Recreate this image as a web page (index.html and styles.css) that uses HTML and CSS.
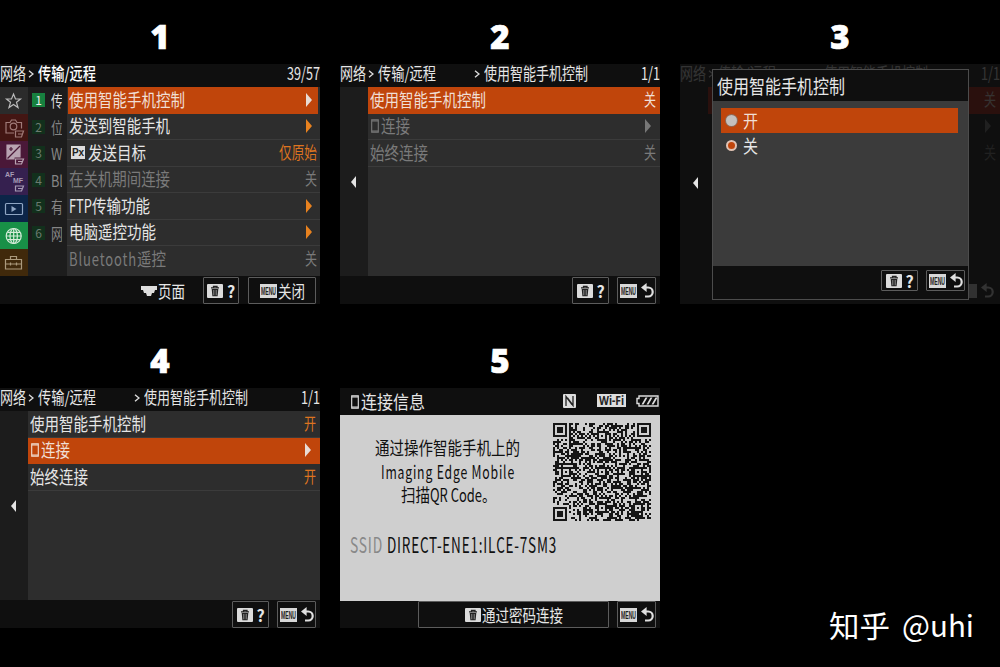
FILE: index.html
```html
<!DOCTYPE html>
<html lang="zh-CN">
<head>
    <meta charset="UTF-8">
    <meta name="viewport" content="width=device-width, initial-scale=1.0">
    <title>使用智能手机控制</title>
    <link rel="stylesheet" href="styles.css">
</head>
<body>
    <!-- shared icons -->
    <svg class="defs">
        <symbol id="trash" viewBox="0 0 16 14">
            <rect width="16" height="14" rx="1" fill="#dcdcdc"/>
            <path d="M4 3.8h8M6.5 3.5V2.3h3.5v1.2" fill="none" stroke="#222" stroke-width="1.3"/>
            <path d="M4.7 5h6.6l-.7 7.3H5.4z" fill="#222"/>
            <path d="M6.8 6v5.3M9.2 6v5.3" stroke="#bbb" stroke-width=".7"/>
        </symbol>
        <symbol id="back" viewBox="0 0 13 15">
            <path d="M3 4.5h4.2a4.5 4.5 0 0 1 0 9H4" fill="none" stroke="#e0e0e0" stroke-width="2.2"/>
            <path d="M0 4.5 5.6 0v9z" fill="#e0e0e0"/>
        </symbol>
        <symbol id="phone" viewBox="0 0 8 14">
            <path d="M.7 .7h6.6v12.6H.7zM1 2h6M1 12h6" fill="none" stroke="currentColor" stroke-width="1.1"/>
        </symbol>
    </svg>

    <div class="sheet">
        <!-- 1 -->
        <div class="step">
            <div class="num">1</div>
            <div class="screen">
                <div class="head">
                    <span class="crumb c1" data-w="26">网络</span>
                    <svg class="gt" viewBox="0 0 6 8"><path d="M1 .8 5 4 1 7.2"/></svg>
                    <span class="crumb c2 strong" data-w="58">传输/远程</span>
                    <span class="page" data-w="33">39/57</span>
                </div>
                <div class="main">
                    <div class="tabs">
                        <div class="tab star"><svg viewBox="0 0 28 27"><path d="m13.500 7 2 5h5l-4 3.300 1.500 5.200-4.500-3.100-4.500 3.100 1.500-5.200-4-3.300h5z"/></svg></div>
                        <div class="tab cam"><svg viewBox="0 0 28 27"><path d="M14 19H6V8.500h4l1.500-2.500h4L17 8.500h4.500v6"/><circle cx="13.500" cy="12.500" r="3.300"/><path d="M15.500 17h8l-2 6h-6zM18 20h4"/></svg></div>
                        <div class="tab exp"><svg viewBox="0 0 28 27"><path d="M7 4h13v12h-6v2H7z" fill="currentColor"/><path d="M7.500 17.500 20 5" stroke="#4a1838"/><path d="M9 8h4M11 6v4" stroke="#4a1838"/><path d="M15.500 18h8l-2 5h-6zM18 20.500h4"/></svg></div>
                        <div class="tab foc"><span class="af">AF</span><span class="mf">MF</span><svg viewBox="0 0 28 27"><path d="M15.500 18h8l-2 5h-6zM18 20.500h4"/></svg></div>
                        <div class="tab play"><svg viewBox="0 0 28 27"><rect x="5.500" y="8.500" width="17" height="11" rx="1"/><path d="m11.500 11 5 3-5 3z" fill="currentColor" stroke="none"/></svg></div>
                        <div class="tab net"><svg viewBox="0 0 28 27"><circle cx="13.700" cy="14" r="7.500"/><ellipse cx="13.700" cy="14" rx="3.700" ry="7.500"/><path d="M13.700 6.500v15M6.300 14h15M7.500 10.300h12.500M7.500 17.700h12.500"/></svg></div>
                        <div class="tab box"><svg viewBox="0 0 28 27"><path d="M5.500 10.500h16v9.500h-16zM10.500 10V7.500h6V10M6 15h15M10.500 13.500v3M16.500 13.500v3"/></svg></div>
                    </div>
                    <div class="groups">
                        <div class="group on"><b>1</b><span data-w="12">传</span></div>
                        <div class="group"><b>2</b><span data-w="12">位</span></div>
                        <div class="group"><b>3</b><span data-w="15">Wi</span></div>
                        <div class="group"><b>4</b><span data-w="12">Bl</span></div>
                        <div class="group"><b>5</b><span data-w="12">有</span></div>
                        <div class="group"><b>6</b><span data-w="12">网</span></div>
                    </div>
                    <div class="list narrow">
                        <div class="row sel"><span data-w="116">使用智能手机控制</span><i class="arrow"></i></div>
                        <div class="row"><span data-w="101">发送到智能手机</span><i class="arrow"></i></div>
                        <div class="row"><em class="px">Px</em><span data-w="58">发送目标</span><span class="val" data-w="38">仅原始</span></div>
                        <div class="row off"><span data-w="101">在关机期间连接</span><span class="val" data-w="12">关</span></div>
                        <div class="row"><span data-w="23">FTP</span><span data-w="58">传输功能</span><i class="arrow"></i></div>
                        <div class="row"><span data-w="87">电脑遥控功能</span><i class="arrow"></i></div>
                        <div class="row off"><span class="wide" data-w="68">Bluetooth</span><span data-w="29">遥控</span><span class="val" data-w="12">关</span></div>
                    </div>
                </div>
                <div class="foot first">
                    <svg class="wheel" viewBox="0 0 16 10"><path d="M0 0h16v4h-2l-1 3h-2l-1 3H6L5 7H3L2 4H0z" fill="#ddd"/></svg>
                    <span class="word" data-w="27">页面</span>
                    <div class="btn help"><svg class="trash"><use href="#trash"/></svg><b>?</b></div>
                    <div class="btn close"><span class="menu"><span data-w="15">MENU</span></span><span class="word" data-w="27">关闭</span></div>
                </div>
            </div>
        </div>

        <!-- 2 -->
        <div class="step">
            <div class="num">2</div>
            <div class="screen">
                <div class="head">
                    <span class="crumb c1" data-w="26">网络</span>
                    <svg class="gt" viewBox="0 0 6 8"><path d="M1 .8 5 4 1 7.2"/></svg>
                    <span class="crumb c2" data-w="58">传输/远程</span>
                    <svg class="gt far" viewBox="0 0 6 8"><path d="M1 .8 5 4 1 7.2"/></svg>
                    <span class="crumb" data-w="104">使用智能手机控制</span>
                    <span class="page" data-w="19">1/1</span>
                </div>
                <div class="main">
                    <div class="gutter"><i class="left"></i></div>
                    <div class="list">
                        <div class="row sel"><span data-w="116">使用智能手机控制</span><span class="val" data-w="12">关</span></div>
                        <div class="row off"><svg class="phone"><use href="#phone"/></svg><span data-w="29">连接</span><i class="arrow"></i></div>
                        <div class="row off"><span data-w="58">始终连接</span><span class="val" data-w="12">关</span></div>
                    </div>
                </div>
                <div class="foot">
                    <div class="btn help"><svg class="trash"><use href="#trash"/></svg><b>?</b></div>
                    <div class="btn return"><span class="menu"><span data-w="15">MENU</span></span><svg class="back"><use href="#back"/></svg></div>
                </div>
            </div>
        </div>

        <!-- 3 -->
        <div class="step">
            <div class="num">3</div>
            <div class="screen dimmed">
                <div class="under">
                    <div class="head">
                        <span class="crumb c1" data-w="26">网络</span>
                        <svg class="gt" viewBox="0 0 6 8"><path d="M1 .8 5 4 1 7.2"/></svg>
                        <span class="crumb c2" data-w="58">传输/远程</span>
                        <svg class="gt far" viewBox="0 0 6 8"><path d="M1 .8 5 4 1 7.2"/></svg>
                        <span class="crumb" data-w="104">使用智能手机控制</span>
                        <span class="page" data-w="19">1/1</span>
                    </div>
                    <div class="main">
                        <div class="gutter"></div>
                        <div class="list">
                            <div class="row sel"><span class="val" data-w="12">关</span></div>
                            <div class="row off"><i class="arrow"></i></div>
                            <div class="row off"><span class="val" data-w="12">关</span></div>
                        </div>
                    </div>
                    <div class="foot">
                        <div class="btn return"><span class="menu"></span><svg class="back"><use href="#back"/></svg></div>
                    </div>
                </div>
                <i class="left over"></i>
                <div class="dialog">
                    <div class="dialog-title"><span data-w="128">使用智能手机控制</span></div>
                    <div class="options">
                        <div class="option sel"><i class="radio"></i><span data-w="15">开</span></div>
                        <div class="option"><i class="radio checked"></i><span data-w="15">关</span></div>
                    </div>
                    <div class="dialog-foot">
                        <div class="btn help"><svg class="trash"><use href="#trash"/></svg><b>?</b></div>
                        <div class="btn return"><span class="menu"><span data-w="15">MENU</span></span><svg class="back"><use href="#back"/></svg></div>
                    </div>
                </div>
            </div>
        </div>

        <!-- 4 -->
        <div class="step">
            <div class="num">4</div>
            <div class="screen">
                <div class="head">
                    <span class="crumb c1" data-w="26">网络</span>
                    <svg class="gt" viewBox="0 0 6 8"><path d="M1 .8 5 4 1 7.2"/></svg>
                    <span class="crumb c2" data-w="58">传输/远程</span>
                    <svg class="gt far" viewBox="0 0 6 8"><path d="M1 .8 5 4 1 7.2"/></svg>
                    <span class="crumb" data-w="104">使用智能手机控制</span>
                    <span class="page" data-w="19">1/1</span>
                </div>
                <div class="main">
                    <div class="gutter"><i class="left"></i></div>
                    <div class="list">
                        <div class="row"><span data-w="116">使用智能手机控制</span><span class="val" data-w="12">开</span></div>
                        <div class="row sel"><svg class="phone"><use href="#phone"/></svg><span data-w="29">连接</span><i class="arrow"></i></div>
                        <div class="row"><span data-w="58">始终连接</span><span class="val" data-w="12">开</span></div>
                    </div>
                </div>
                <div class="foot">
                    <div class="btn help"><svg class="trash"><use href="#trash"/></svg><b>?</b></div>
                    <div class="btn return"><span class="menu"><span data-w="15">MENU</span></span><svg class="back"><use href="#back"/></svg></div>
                </div>
            </div>
        </div>

        <!-- 5 -->
        <div class="step">
            <div class="num">5</div>
            <div class="screen">
                <div class="info-head">
                    <svg class="phone"><use href="#phone"/></svg><span data-w="64">连接信息</span>
                    <svg class="nfc" viewBox="0 0 13 14"><rect width="13" height="14" rx="1" fill="#ddd"/><path d="M3 12V2.500l6 8M10 2v9.500L4.500 4" fill="none" stroke="#222" stroke-width="1.300"/></svg>
                    <span class="wifi"><span data-w="25">Wi-Fi</span></span>
                    <svg class="battery" viewBox="0 0 24 12"><path d="M4 1h19v10H4V8.500H2v-5h2z" fill="none" stroke="#ddd" stroke-width="1.400"/><path d="m6.500 9.500 4-7h2l-4 7zM11.500 9.500l4-7h2l-4 7zM16.500 9.500l4-7h1.500v1l-3.500 6z" fill="#ddd"/></svg>
                </div>
                <div class="info">
                    <div class="scan">
                        <div class="guide">
                            <span data-w="145">通过操作智能手机上的</span>
                            <span class="wide" data-w="134">Imaging Edge Mobile</span>
                            <span class="scanline"><span data-w="29">扫描</span><span data-w="52">QR Code</span><span data-w="14">。</span></span>
                        </div>
                        <svg class="qr" id="qr" viewBox="0 0 49 49"></svg>
                    </div>
                    <div class="ssid"><span class="label wide" data-w="33">SSID</span><span class="wide" data-w="170">DIRECT-ENE1:ILCE-7SM3</span></div>
                </div>
                <div class="foot">
                    <div class="btn password"><svg class="trash"><use href="#trash"/></svg><span class="word" data-w="81">通过密码连接</span></div>
                    <div class="btn return"><span class="menu"><span data-w="15">MENU</span></span><svg class="back"><use href="#back"/></svg></div>
                </div>
            </div>
        </div>

        <div class="credit"><span data-w="61">知乎</span><span data-w="72">@uhi</span></div>
    </div>

    <script src="script.js"></script>
</body>
</html>
```
FILE: styles.css
```css
* {
    box-sizing: border-box;
}

body {
    margin: 0;
    width: 1000px;
    height: 667px;
    overflow: hidden;
    background: #000;
    color: #e6e6e6;
    font-family: "Noto Sans CJK SC", "Noto Sans", sans-serif;
    font-size: 18px;
}

.defs {
    position: absolute;
    width: 0;
    height: 0;
}

svg {
    display: block;
    flex: none;
}

.sheet {
    display: grid;
    grid-template-columns: 320px 320px 320px;
    grid-template-rows: 324px 324px;
    column-gap: 20px;
}

.num {
    height: 64px;
    padding-top: 9px;
    line-height: 56px;
    font-family: "Open Sans", sans-serif;
    font-weight: 800;
    font-size: 33px;
    text-align: center;
    color: #fff;
    -webkit-text-stroke: .7px #fff;
}

.screen {
    display: flex;
    flex-direction: column;
    width: 320px;
    height: 240px;
    background: #0f0f0f;
    position: relative;
}

/* the camera font is condensed, script.js squeezes every label to data-w */
[data-w] {
    display: inline-block;
    flex: none;
    white-space: nowrap;
    transform-origin: left center;
}

.wide {
    letter-spacing: 1.2px;
}

.head {
    display: flex;
    align-items: center;
    height: 23px;
    flex: none;
    padding-bottom: 5px;
    font-size: 16.5px;
    line-height: 18px;
}

.gt {
    width: 6px;
    height: 8px;
    margin: 2px 4px 0 2px;
    fill: none;
    stroke: #ddd;
    stroke-width: 1.4;
}

.gt.far {
    margin: 2px 4px 0 38px;
}

.strong {
    font-weight: 500;
    color: #fff;
}

.page {
    margin-left: auto;
    font-size: 17.5px;
}

.main {
    display: flex;
    height: 189px;
    flex: none;
}

.tabs {
    width: 28px;
}

.tab {
    height: 27px;
    position: relative;
    color: #a99;
}

.tab svg {
    width: 28px;
    height: 27px;
    fill: none;
    stroke: currentColor;
    stroke-width: 1.2;
}

.star { background: #2b2b2b; color: #bbb; }
.cam { background: #431613; color: #a07a78; }
.exp { background: #4a1838; color: #b9a3b2; }
.foc { background: #35204f; color: #a79bb5; }
.play { background: #0c2548; color: #8fa6c4; }
.net { background: #189047; color: #d5ecd9; }
.box { background: #40290b; color: #ab9a7d; }

.af, .mf {
    position: absolute;
    font: bold 7px/8px "Liberation Sans", sans-serif;
}

.af { left: 5px; top: 3px; }
.mf { left: 13px; top: 9px; }

.groups {
    width: 39px;
    background: #1d1d1d;
}

.group {
    display: flex;
    align-items: center;
    height: 26.5px;
    width: 34px;
    padding-left: 4px;
    overflow: hidden;
    font-size: 15.5px;
    color: #858585;
}

.group b {
    flex: none;
    width: 13px;
    height: 14px;
    margin-right: 6px;
    background: #12301c;
    color: #6b7b70;
    font: 12px/14px "Noto Sans CJK SC", sans-serif;
    text-align: center;
}

.group.on {
    color: #ddd;
}

.group.on b {
    background: #17813f;
    color: #eee;
}

.gutter {
    width: 28px;
    background: #1c1c1c;
    display: flex;
    align-items: center;
    padding-left: 11px;
}

.left {
    border: solid transparent;
    border-width: 6px 5px 6px 0;
    border-right-color: #e4e4e4;
}

.list {
    flex: 1;
    background: #2d2d2d;
}

.row {
    display: flex;
    align-items: center;
    height: 26.5px;
    padding: 0 4px 2px 2px;
    border-bottom: 1px solid #3b3b3b;
    line-height: 22px;
}

.narrow .row:last-child {
    border-bottom: 0;
}

.row.sel {
    background: #c0450b;
    color: #f0dfd5;
    border-color: #c0450b;
}

.narrow .row {
    padding-right: 3px;
}

.narrow .row.sel {
    margin: 0 2px 0 1px;
    padding: 0 1px 2px;
}

.row.off {
    color: #7a7a7a;
}

.val {
    margin-left: auto;
    font-size: 16.5px;
    color: #dd7420;
}

.sel .val, .off .val {
    color: inherit;
}

.arrow {
    margin: 2px 5px 0 auto;
    border: solid transparent;
    border-width: 7px 0 7px 6px;
    border-left-color: #e8821f;
}

.sel .arrow {
    border-left-color: #e8dcd5;
}

.off .arrow {
    border-left-color: #777;
}

.px {
    width: 14px;
    height: 13px;
    margin: 1px 3px 0 2px;
    background: #ddd;
    color: #222;
    font: bold 10px/13px "Liberation Sans", sans-serif;
    text-align: center;
}

.phone {
    width: 8px;
    height: 14px;
    margin: 2px 2px 0 1px;
}

.foot {
    display: flex;
    justify-content: flex-end;
    align-items: center;
    gap: 8px;
    height: 28px;
    padding: 1px 4px 0 0;
}

.foot.first {
    gap: 9px;
    padding-right: 4px;
}

.wheel {
    width: 16px;
    height: 10px;
    margin-right: -8px;
}

.first .help {
    margin-left: 9px;
}

.first .word {
    margin-left: 0;
}

.word {
    font-size: 17.5px;
    line-height: 24px;
}

.btn {
    display: flex;
    align-items: center;
    justify-content: center;
    gap: 4px;
    height: 27px;
    border: 1px solid #5c5c5c;
    border-radius: 1px;
}

.help {
    width: 37px;
}

.first .help {
    width: 36px;
}

.help b {
    width: 8px;
    font: bold 16px/20px "Noto Sans CJK SC", sans-serif;
}

.return {
    width: 39px;
    gap: 4px;
}

.close {
    width: 68px;
    gap: 1px;
}

.password {
    width: 191px;
    gap: 1px;
}

.trash {
    width: 16px;
    height: 14px;
}

.back {
    width: 13px;
    height: 15px;
}

.menu {
    width: 17px;
    height: 14px;
    padding-left: 1px;
    background: #d8d8d8;
    color: #222;
    font: bold 11px/14px "Liberation Sans", sans-serif;
    overflow: hidden;
}

/* dialog over the greyed menu */
.under {
    opacity: .17;
}

.under .list, .under .gutter {
    background: none;
}

.under .row {
    border-color: transparent;
}

.under .row.sel {
    background: #b01808;
}

.under .btn {
    border-color: transparent;
}

.over {
    position: absolute;
    left: 13px;
    top: 113px;
}

.dialog {
    position: absolute;
    left: 32px;
    top: 5px;
    width: 257px;
    height: 231px;
    display: flex;
    flex-direction: column;
    border: 1px solid #4c4c4c;
    background: #0f0f0f;
}

.dialog-title {
    height: 31px;
    padding: 2px 0 0 4px;
    font-size: 19.5px;
    line-height: 28px;
}

.options {
    flex: 1;
    padding: 7px 10px 0 8px;
    background: #3b3b3b;
}

.option {
    display: flex;
    align-items: center;
    height: 25px;
    padding: 0 0 2px 5px;
    font-size: 18.5px;
    line-height: 22px;
}

.option.sel {
    background: #c0450b;
    color: #f0dfd5;
}

.radio {
    width: 11px;
    height: 11px;
    margin: 2px 6px 0 0;
    border-radius: 50%;
    background: #c4c0bd;
    box-shadow: 0 0 0 1px #8f6a58;
}

.radio.checked {
    border: 2px solid #e0c2b3;
    background: #c0450b;
    box-shadow: none;
}

.dialog-foot {
    display: flex;
    justify-content: flex-end;
    gap: 8px;
    height: 33px;
    padding: 4px 3px 0 0;
}

.dialog-foot .btn {
    height: 21px;
}

/* connection info */
.info-head {
    display: flex;
    align-items: center;
    flex: none;
    height: 27px;
    padding: 0 0 2px 10px;
    font-size: 18.5px;
    line-height: 24px;
}

.nfc {
    width: 13px;
    height: 14px;
    margin-left: 138px;
}

.wifi {
    width: 29px;
    height: 13px;
    margin-left: 21px;
    padding-left: 2px;
    background: #ddd;
    color: #222;
    font: bold 12px/13px "Noto Sans", sans-serif;
}

.battery {
    width: 24px;
    height: 12px;
    margin-left: 9px;
}

.info {
    height: 186px;
    flex: none;
    background: #cfcfcf;
    color: #101010;
}

.info + .foot {
    height: 27px;
    padding-top: 0;
}

.scan {
    display: flex;
    padding: 8px 9px 0 0;
    height: 114px;
}

.guide {
    flex: 1;
    padding: 13px 0 0 35px;
    display: flex;
    flex-direction: column;
    align-items: flex-start;
    line-height: 23.5px;
}

.guide > .wide {
    margin-left: 6px;
}

.scanline {
    margin-left: 26px;
}

.qr {
    width: 98px;
    height: 98px;
}

.ssid {
    display: flex;
    padding-left: 10px;
    gap: 4px;
    font-size: 21px;
    line-height: 30px;
}

.label {
    color: #888;
}

.credit {
    position: absolute;
    left: 829px;
    top: 602px;
    display: flex;
    gap: 12px;
    font-size: 30px;
    line-height: 44px;
    color: #fff;
}
```
FILE: script.js
```js
// squeeze labels to their width on the camera display
document.querySelectorAll('[data-w]').forEach(el => {
    const natural = el.getBoundingClientRect().width;
    const w = Number(el.dataset.w);
    el.style.transform = `scaleX(${w / natural})`;
    el.style.marginRight = (w - natural) + 'px';
});

// QR code, 49 x 49 modules
const size = 49;
let seed = 7315;
function rnd() {
    seed = (seed * 1103515245 + 12345) % 2147483648;
    return seed / 2147483648;
}

const grid = [];
for (let y = 0; y < size; y++) {
    grid.push([]);
    for (let x = 0; x < size; x++) {
        grid[y].push(rnd() < 0.52);
    }
}

function square(cx, cy, rings) {
    const r = rings.length - 1;
    for (let y = -r; y <= r; y++) {
        for (let x = -r; x <= r; x++) {
            const d = Math.max(Math.abs(x), Math.abs(y));
            if (grid[cy + y] && grid[cy + y][cx + x] !== undefined) {
                grid[cy + y][cx + x] = rings[d] === 1;
            }
        }
    }
}

for (let i = 8; i < size - 8; i++) {
    grid[6][i] = grid[i][6] = i % 2 === 0;
}
[[24, 6], [6, 24], [24, 24], [42, 24], [24, 42], [42, 42]].forEach(p => square(p[0], p[1], [1, 0, 1]));
[[3, 3], [45, 3], [3, 45]].forEach(p => square(p[0], p[1], [1, 1, 0, 1, 0]));

let d = '';
grid.forEach((line, y) => line.forEach((on, x) => {
    if (on) d += `M${x} ${y}h1v1h-1z`;
}));
document.getElementById('qr').innerHTML = `<path d="${d}" fill="#161616" shape-rendering="crispEdges"/>`;
```
